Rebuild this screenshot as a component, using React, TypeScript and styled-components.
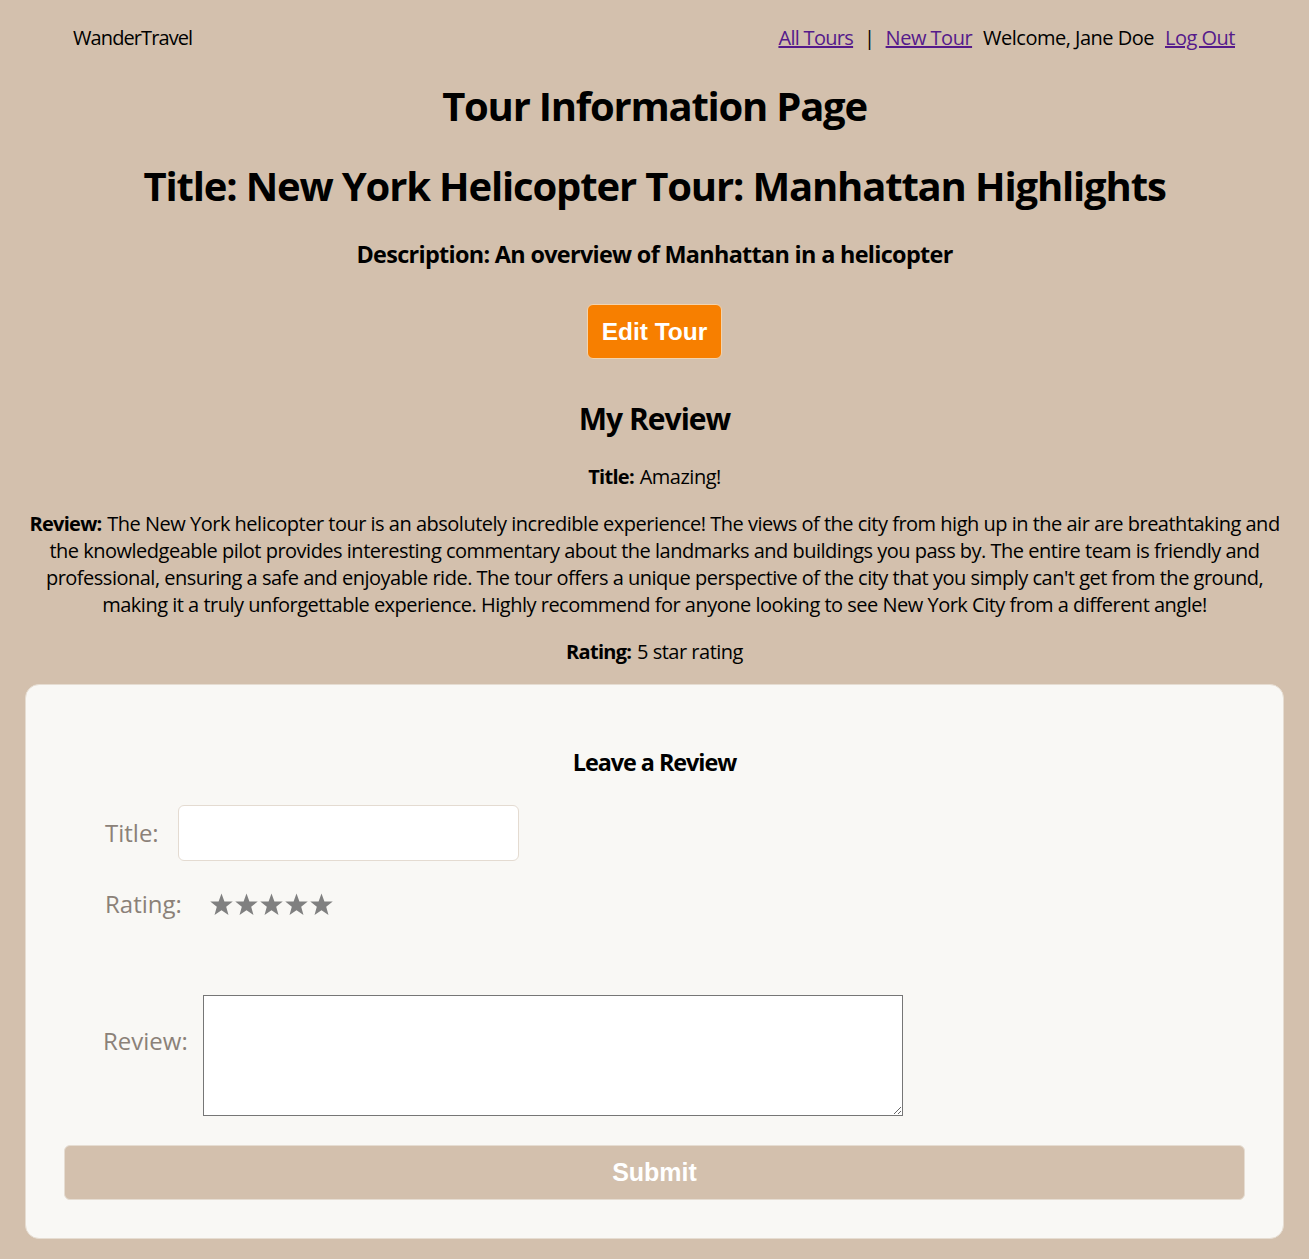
import React from "react";
import styled, { createGlobalStyle } from "styled-components";

const GlobalStyle = createGlobalStyle`
  html, body {
    margin: 0;
    padding: 0;
    background: #d3c0ad;
  }
  body {
    font-family: "Open Sans", "Noto Sans", sans-serif;
    font-size: 20px;
    letter-spacing: -0.025em;
    color: #000;
  }
  * { box-sizing: border-box; }
`;

const Page = styled.div`
  min-height: 1259px;
  background: #d3c0ad;
  padding-bottom: 20px;
`;

const Nav = styled.nav`
  display: flex;
  justify-content: space-between;
  align-items: center;
  padding: 26px 74px 0 73px;
  font-size: 20px;
  line-height: 24px;
`;

const Brand = styled.div`
  color: #000;
  letter-spacing: -0.045em;
`;

const NavLinks = styled.div`
  display: flex;
  align-items: center;
  gap: 11px;
`;

const NavLink = styled.a<{ $tight?: boolean }>`
  color: #551a8b;
  text-decoration: underline;
  letter-spacing: ${(p) => (p.$tight ? "-0.035em" : "-0.025em")};
  cursor: pointer;
`;

const Main = styled.main`
  padding: 0 25px 0 25px;
  text-align: center;
`;

const PageTitle = styled.h1`
  margin: 32px 0 0;
  font-size: 40px;
  line-height: 48px;
  font-weight: 700;
  letter-spacing: -0.031em;
`;

const TourTitle = styled.h1`
  margin: 32px 0 0;
  font-size: 40px;
  line-height: 48px;
  font-weight: 700;
  letter-spacing: -0.029em;
`;

const Description = styled.h3`
  margin: 29px 0 0;
  font-size: 23.4px;
  line-height: 30px;
  font-weight: 700;
  letter-spacing: -0.029em;
`;

const EditButton = styled.button`
  margin-top: 35px;
  height: 55px;
  padding: 0 14px;
  background: #f77f00;
  color: #fff;
  border: 1px solid #f3d3ad;
  border-radius: 6px;
  font-family: "Liberation Sans", Arial, sans-serif;
  letter-spacing: 0;
  font-weight: 700;
  font-size: 24.5px;
  cursor: pointer;
`;

const SectionTitle = styled.h2`
  margin: 40px 0 0;
  font-size: 30px;
  line-height: 40px;
  font-weight: 700;
  letter-spacing: -0.032em;
`;

const Para = styled.p<{ $gap: number }>`
  margin: ${(p) => p.$gap}px 0 0;
  font-size: 20px;
  line-height: 27px;
`;

const Key = styled.b`
  font-weight: 700;
  letter-spacing: -0.035em;
  margin-right: 1px;
`;

const Card = styled.section`
  margin-top: 19px;
  background: #f9f8f5;
  border: 1px solid #e6ddd2;
  border-radius: 14px;
  padding: 62px 38px 38px;
`;

const FormTitle = styled.h3`
  margin: 0;
  font-size: 23.4px;
  line-height: 30px;
  font-weight: 700;
  letter-spacing: -0.045em;
  text-align: center;
`;

const Row = styled.div<{ $top: number; $align?: string }>`
  display: flex;
  align-items: ${(p) => p.$align || "center"};
  margin-top: ${(p) => p.$top}px;
  text-align: left;
`;

const Label = styled.label<{ $left: number; $gap: number; $pt?: number }>`
  margin-left: ${(p) => p.$left}px;
  margin-right: ${(p) => p.$gap}px;
  padding-top: ${(p) => p.$pt || 0}px;
  font-size: 24px;
  line-height: 30px;
  letter-spacing: 0;
  color: #8b8178;
`;

const TextInput = styled.input`
  width: 341px;
  height: 56px;
  background: #fff;
  border: 1px solid #e4dbd1;
  border-radius: 6px;
  font-size: 18px;
  padding: 0 10px;
`;

const Stars = styled.div`
  display: flex;
  gap: 0px;
  color: #808080;
`;

const ReviewArea = styled.textarea`
  width: 700px;
  height: 121px;
  background: #fff;
  border: 1px solid #767676;
  border-radius: 0;
  font-size: 16px;
  resize: both;
`;

const SubmitButton = styled.button`
  display: block;
  width: 100%;
  height: 55px;
  margin-top: 29px;
  background: #d3c0ad;
  color: #fff;
  border: 1px solid #e6ddd2;
  border-radius: 6px;
  font-family: "Liberation Sans", Arial, sans-serif;
  letter-spacing: 0;
  font-weight: 700;
  font-size: 25px;
  cursor: pointer;
`;

const Star: React.FC = () => (
  <svg width="25" height="25" viewBox="0 0 24 24" aria-hidden="true">
    <polygon
      fill="#808080"
      points="12,1.5 14.8,9 22.8,9.2 16.5,14.2 18.7,22 12,17.5 5.3,22 7.5,14.2 1.2,9.2 9.2,9"
    />
  </svg>
);

export default function App() {
  return (
    <Page>
      <GlobalStyle />
      <Nav>
        <Brand>WanderTravel</Brand>
        <NavLinks>
          <NavLink $tight>All Tours</NavLink>
          <span>|</span>
          <NavLink>New Tour</NavLink>
          <span>Welcome, Jane Doe</span>
          <NavLink>Log Out</NavLink>
        </NavLinks>
      </Nav>
      <Main>
        <PageTitle>Tour Information Page</PageTitle>
        <TourTitle>Title: New York Helicopter Tour: Manhattan Highlights</TourTitle>
        <Description>Description: An overview of Manhattan in a helicopter</Description>
        <EditButton>Edit Tour</EditButton>
        <SectionTitle>My Review</SectionTitle>
        <Para $gap={24}>
          <Key>Title:</Key> Amazing!
        </Para>
        <Para $gap={20}>
          <Key>Review:</Key> The New York helicopter tour is an absolutely incredible experience! The
          views of the city from high up in the air are breathtaking and the knowledgeable pilot
          provides interesting commentary about the landmarks and buildings you pass by. The entire
          team is friendly and professional, ensuring a safe and enjoyable ride. The tour offers a
          unique perspective of the city that you simply can't get from the ground, making it a
          truly unforgettable experience. Highly recommend for anyone looking to see New York City
          from a different angle!
        </Para>
        <Para $gap={20}>
          <Key>Rating:</Key> 5 star rating
        </Para>
        <Card>
          <FormTitle>Leave a Review</FormTitle>
          <Row $top={28}>
            <Label $left={41} $gap={19}>Title:</Label>
            <TextInput type="text" />
          </Row>
          <Row $top={28}>
            <Label $left={41} $gap={27}>Rating:</Label>
            <Stars>
              <Star />
              <Star />
              <Star />
              <Star />
              <Star />
            </Stars>
          </Row>
          <Row $top={76} $align="flex-start">
            <Label $left={39} $gap={15} $pt={31}>Review:</Label>
            <ReviewArea />
          </Row>
          <SubmitButton>Submit</SubmitButton>
        </Card>
      </Main>
    </Page>
  );
}
